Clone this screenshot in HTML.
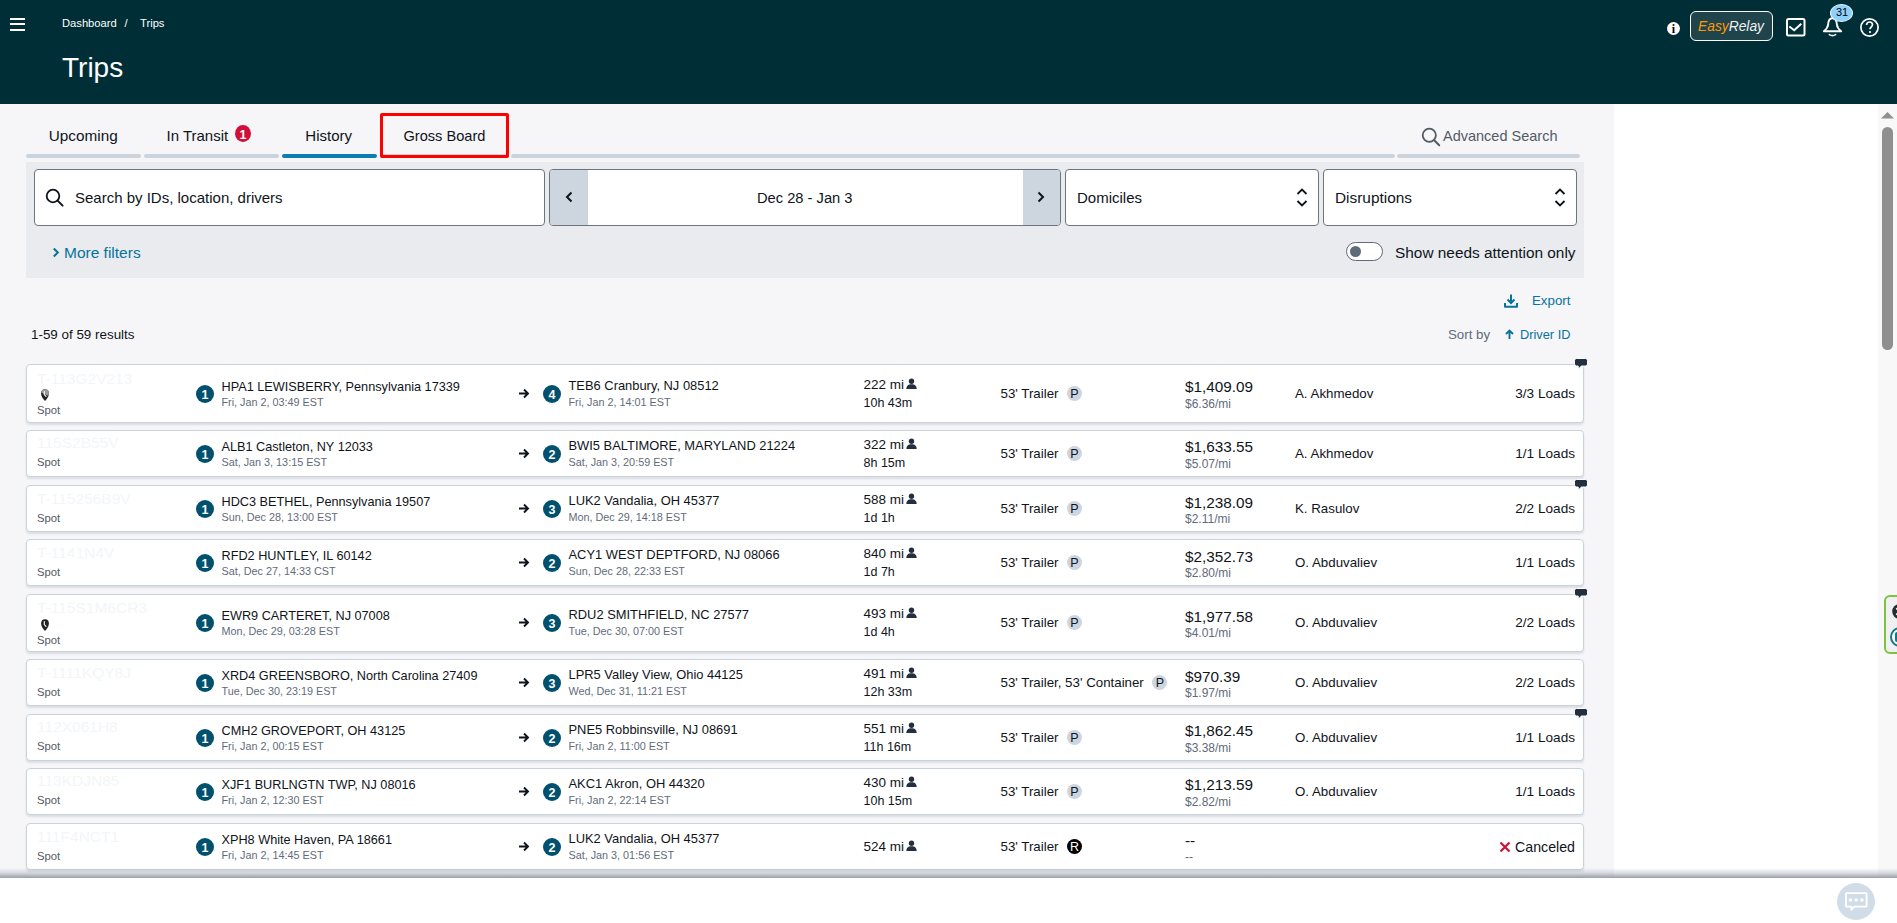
<!DOCTYPE html><html><head><meta charset="utf-8"><title>Trips</title><style>
*{margin:0;padding:0;box-sizing:border-box}
html,body{width:1897px;height:923px;overflow:hidden;background:#fff}
body{position:relative;font-family:"Liberation Sans",sans-serif;color:#0f141a}
.t{position:absolute;white-space:nowrap}
.card{position:absolute;left:26px;width:1558px;background:#fff;border:1px solid #c9d3dd;border-radius:4px;box-shadow:0 2px 2px rgba(30,50,80,0.12)}
.badge{position:absolute;width:18px;height:18px;border-radius:50%;background:#00506e;color:#fff;font-weight:700;font-size:12.5px;line-height:20px;text-align:center}
.pb{position:absolute;top:0;margin-left:8.5px;width:15px;height:15px;border-radius:50%;background:#cdd5e0;color:#0f141a;font-size:12.5px;line-height:17px;text-align:center}
.rb{position:absolute;top:0;margin-left:8.5px;width:15px;height:15px;border-radius:50%;background:#000;color:#fff;font-weight:400;font-size:12.5px;line-height:17px;text-align:center}
</style></head><body><div style="position:absolute;left:0px;top:0px;width:1897px;height:923px;background:#ffffff"></div>
<div style="position:absolute;left:0px;top:104px;width:1614px;height:773px;background:#f6f6f9"></div>
<div style="position:absolute;left:1878px;top:104px;width:19px;height:773px;background:#f8f8f8"></div>
<div style="position:absolute;left:0px;top:0px;width:1897px;height:104px;background:#002e36"></div>
<div style="position:absolute;left:10px;top:18px;width:15px;height:2px;background:#fff"></div>
<div style="position:absolute;left:10px;top:23px;width:15px;height:2px;background:#fff"></div>
<div style="position:absolute;left:10px;top:29px;width:15px;height:2px;background:#fff"></div>
<div class="t " style="left:62px;top:17px;font-size:11.2px;line-height:12px;color:#ffffff;font-weight:400;">Dashboard</div>
<div class="t " style="left:124.5px;top:17px;font-size:11.2px;line-height:12px;color:#ffffff;font-weight:400;">/</div>
<div class="t " style="left:140px;top:17px;font-size:11.2px;line-height:12px;color:#ffffff;font-weight:400;">Trips</div>
<div class="t " style="left:62px;top:52px;font-size:28px;line-height:31px;color:#ffffff;font-weight:400;">Trips</div>
<div style="position:absolute;left:1667px;top:22px;width:13px;height:13px;border-radius:50%;background:#fff;"></div>
<div class="t" style="left:1667px;top:22px;width:13px;text-align:center;font-family:'Liberation Serif',serif;font-weight:700;font-size:12px;line-height:14px;color:#000">i</div>
<div style="position:absolute;left:1690px;top:11px;width:83px;height:30px;border:1.5px solid #fff;border-radius:6px;background:#1f444c"></div>
<div class="t " style="left:1698px;top:19px;font-size:13.8px;line-height:15px;color:#fff;font-weight:400;font-style:italic"><span style="color:#ff9900">Easy</span><span style="color:#f2f2f2">Relay</span></div>
<svg style="position:absolute;left:1786px;top:18px" width="20" height="19" viewBox="0 0 20 19"><rect x="1" y="1" width="17.5" height="16.5" rx="1.5" fill="none" stroke="#fff" stroke-width="2"/><path d="M3.3 8.5 L8.2 12.2 L15.3 5.7" fill="none" stroke="#fff" stroke-width="2"/></svg>
<svg style="position:absolute;left:1822px;top:16px" width="22" height="22" viewBox="0 0 22 22"><path d="M1.8 15.3 C4 13.5 5.9 12 6.1 8.5 C6.3 4.6 7.9 2.3 10.5 2.3 C13.1 2.3 14.7 4.6 14.9 8.5 C15.1 12 17 13.5 19.2 15.3 Z" fill="none" stroke="#fff" stroke-width="1.9" stroke-linejoin="round"/><path d="M7.4 18.6 Q10.5 20.6 13.6 18.6" fill="none" stroke="#fff" stroke-width="1.7" stroke-linecap="round"/></svg>
<div style="position:absolute;left:1830px;top:4px;width:23px;height:18px;border-radius:50%;background:#8dd1fa;border:1px solid #e8f4fb;box-sizing:border-box"></div>
<div class="t " style="left:1830px;top:6px;font-size:11px;line-height:12px;color:#000000;font-weight:400;width:24px;text-align:center">31</div>
<svg style="position:absolute;left:1859px;top:17px" width="21" height="21" viewBox="0 0 21 21"><circle cx="10.5" cy="10.5" r="8.6" fill="none" stroke="#fff" stroke-width="1.7"/><path d="M7.6 8 C7.6 6 9 5 10.5 5 C12.2 5 13.5 6.2 13.5 7.8 C13.5 9.8 11 10 11 12.3" fill="none" stroke="#fff" stroke-width="1.7"/><circle cx="11" cy="15" r="1.1" fill="#fff"/></svg>
<div style="position:absolute;left:26px;top:154px;width:115px;height:4px;background:#cbd3dc;border-radius:2px"></div>
<div class="t " style="left:48.8px;top:127px;font-size:15.3px;line-height:17px;color:#0f141a;font-weight:400;">Upcoming</div>
<div style="position:absolute;left:144px;top:154px;width:135px;height:4px;background:#cbd3dc;border-radius:2px"></div>
<div class="t " style="left:166.5px;top:127px;font-size:15px;line-height:17px;color:#0f141a;font-weight:400;">In Transit</div>
<div style="position:absolute;left:282px;top:154px;width:95px;height:4px;background:#0b7eb0;border-radius:2px"></div>
<div class="t " style="left:305.3px;top:127px;font-size:15px;line-height:17px;color:#0f141a;font-weight:400;">History</div>
<div style="position:absolute;left:380px;top:154px;width:129px;height:4px;background:#cbd3dc;border-radius:2px"></div>
<div class="t " style="left:403.5px;top:128px;font-size:14.6px;line-height:16px;color:#0f141a;font-weight:400;">Gross Board</div>
<div style="position:absolute;left:511px;top:154px;width:884px;height:4px;background:#cbd3dc;border-radius:2px"></div>
<div style="position:absolute;left:1397px;top:154px;width:183px;height:4px;background:#cbd3dc;border-radius:2px"></div>
<div style="position:absolute;left:235px;top:125px;width:16px;height:17px;border-radius:50%;background:#d0103a"></div>
<div class="t " style="left:235px;top:127.5px;font-size:12.5px;line-height:14px;color:#fff;font-weight:700;width:16px;text-align:center">1</div>
<div style="position:absolute;left:380px;top:113px;width:129px;height:45px;border:3px solid #ff0000;box-sizing:border-box;border-radius:2px"></div>
<svg style="position:absolute;left:1421px;top:127px" width="20" height="20" viewBox="0 0 20 20"><circle cx="8.3" cy="8.3" r="6.6" fill="none" stroke="#545b64" stroke-width="1.8"/><path d="M13 13 L18.2 18.2" stroke="#545b64" stroke-width="2" stroke-linecap="round"/></svg>
<div class="t " style="left:1443px;top:128px;font-size:14.5px;line-height:16px;color:#545b64;font-weight:400;">Advanced Search</div>
<div style="position:absolute;left:26px;top:162px;width:1558px;height:116px;background:#e9ebef"></div>
<div style="position:absolute;left:34px;top:169px;width:511px;height:57px;border:1px solid #6b757f;border-radius:4px;background:#fff;box-sizing:border-box"></div>
<div style="position:absolute;left:549px;top:169px;width:512px;height:57px;border:1px solid #6b757f;border-radius:4px;background:#fff;box-sizing:border-box"></div>
<div style="position:absolute;left:1065px;top:169px;width:254px;height:57px;border:1px solid #6b757f;border-radius:4px;background:#fff;box-sizing:border-box"></div>
<div style="position:absolute;left:1323px;top:169px;width:254px;height:57px;border:1px solid #6b757f;border-radius:4px;background:#fff;box-sizing:border-box"></div>
<svg style="position:absolute;left:45px;top:188px" width="20" height="20" viewBox="0 0 20 20"><circle cx="8" cy="8" r="6.3" fill="none" stroke="#0f141a" stroke-width="1.8"/><path d="M12.6 12.6 L17.6 17.6" stroke="#0f141a" stroke-width="2" stroke-linecap="round"/></svg>
<div class="t " style="left:75px;top:189px;font-size:15px;line-height:17px;color:#0f141a;font-weight:400;">Search by IDs, location, drivers</div>
<div style="position:absolute;left:550px;top:170px;width:38px;height:55px;background:#cdd5de;border-radius:3px 0 0 3px"></div>
<div style="position:absolute;left:1023px;top:170px;width:37px;height:55px;background:#cdd5de;border-radius:0 3px 3px 0"></div>
<svg style="position:absolute;left:564px;top:191px" width="10" height="12" viewBox="0 0 10 12"><path d="M7.5 1.5 L3 6 L7.5 10.5" fill="none" stroke="#0f141a" stroke-width="2"/></svg>
<svg style="position:absolute;left:1036px;top:191px" width="10" height="12" viewBox="0 0 10 12"><path d="M2.5 1.5 L7 6 L2.5 10.5" fill="none" stroke="#0f141a" stroke-width="2"/></svg>
<div class="t " style="left:757px;top:190px;font-size:14.7px;line-height:16px;color:#0f141a;font-weight:400;">Dec 28 - Jan 3</div>
<div class="t " style="left:1077px;top:189px;font-size:15px;line-height:17px;color:#0f141a;font-weight:400;">Domiciles</div>
<div class="t " style="left:1335px;top:189px;font-size:15.4px;line-height:17px;color:#0f141a;font-weight:400;">Disruptions</div>
<svg style="position:absolute;left:1296px;top:188px" width="12" height="19" viewBox="0 0 12 19"><path d="M1.5 6 L6 1.5 L10.5 6 M1.5 13 L6 17.5 L10.5 13" fill="none" stroke="#0f141a" stroke-width="1.8"/></svg>
<svg style="position:absolute;left:1553.5px;top:188px" width="12" height="19" viewBox="0 0 12 19"><path d="M1.5 6 L6 1.5 L10.5 6 M1.5 13 L6 17.5 L10.5 13" fill="none" stroke="#0f141a" stroke-width="1.8"/></svg>
<svg style="position:absolute;left:52px;top:247px" width="8" height="11" viewBox="0 0 8 11"><path d="M1.8 1.5 L5.8 5.5 L1.8 9.5" fill="none" stroke="#07739a" stroke-width="2"/></svg>
<div class="t " style="left:64px;top:244px;font-size:15.5px;line-height:17px;color:#07739a;font-weight:400;">More filters</div>
<div style="position:absolute;left:1346px;top:242px;width:37px;height:19px;border:1px solid #5f6b7a;border-radius:10px;background:#fff;box-sizing:border-box"></div>
<div style="position:absolute;left:1350px;top:246px;width:11px;height:11px;border-radius:50%;background:#5f6b7a"></div>
<div class="t " style="left:1395px;top:244px;font-size:15.4px;line-height:17px;color:#0f141a;font-weight:400;">Show needs attention only</div>
<svg style="position:absolute;left:1503px;top:293px" width="16" height="16" viewBox="0 0 16 16"><path d="M8 1.5 V9.5 M4.5 6.5 L8 10 L11.5 6.5" fill="none" stroke="#07739a" stroke-width="2"/><path d="M2 10 V13.8 H14 V10" fill="none" stroke="#07739a" stroke-width="2" stroke-linejoin="round"/></svg>
<div class="t " style="left:1532px;top:293px;font-size:13.3px;line-height:15px;color:#07739a;font-weight:400;">Export</div>
<div class="t " style="left:31px;top:327px;font-size:13.4px;line-height:15px;color:#0f141a;font-weight:400;">1-59 of 59 results</div>
<div class="t " style="left:1448px;top:327px;font-size:13.3px;line-height:15px;color:#5f6b7a;font-weight:400;">Sort by</div>
<svg style="position:absolute;left:1504px;top:329px" width="11" height="11" viewBox="0 0 11 11"><path d="M5.5 10 V2 M2 5 L5.5 1.5 L9 5" fill="none" stroke="#07739a" stroke-width="1.9"/></svg>
<div class="t " style="left:1520px;top:327px;font-size:12.8px;line-height:15px;color:#07739a;font-weight:400;">Driver ID</div>
<div class="card" style="top:364px;height:59px"></div>
<div class="t " style="left:37px;top:370px;font-size:15.5px;line-height:17px;color:#f3f6f9;font-weight:400;">T-113G2V213</div>
<svg style="position:absolute;left:41px;top:389px" width="8" height="12" viewBox="0 0 8 12"><defs><clipPath id="shc364"><path d="M4 0.3 C6.6 0.3 7.9 1.9 7.9 4.4 C7.9 7.4 5.7 10 4 11.9 C2.3 10 0.1 7.4 0.1 4.4 C0.1 1.9 1.4 0.3 4 0.3 Z"/></clipPath></defs><path d="M4 0.3 C6.6 0.3 7.9 1.9 7.9 4.4 C7.9 7.4 5.7 10 4 11.9 C2.3 10 0.1 7.4 0.1 4.4 C0.1 1.9 1.4 0.3 4 0.3 Z" fill="#232323"/><path d="M-1 -1 H9 V7.6 L-1 3 Z" fill="#9a9a9a" clip-path="url(#shc364)"/><path d="M3.3 2.6 V5.6 L5 7.3" fill="none" stroke="#fff" stroke-width="1.1" stroke-linecap="round"/></svg>
<div class="t " style="left:37px;top:404px;font-size:11.3px;line-height:12px;color:#545b64;font-weight:400;">Spot</div>
<div class="badge" style="left:196px;top:384.5px">1</div>
<div class="t " style="left:221.5px;top:380px;font-size:12.7px;line-height:14px;color:#0f141a;font-weight:400;">HPA1 LEWISBERRY, Pennsylvania 17339</div>
<div class="t " style="left:221.5px;top:396px;font-size:10.8px;line-height:12px;color:#5f6b7a;font-weight:400;">Fri, Jan 2, 03:49 EST</div>
<svg style="position:absolute;left:518px;top:388.0px" width="12" height="11" viewBox="0 0 12 11"><path d="M1 5.5 H10 M6 1.5 L10 5.5 L6 9.5" fill="none" stroke="#0f141a" stroke-width="1.9"/></svg>
<div class="badge" style="left:543px;top:384.5px">4</div>
<div class="t " style="left:568.5px;top:378px;font-size:12.9px;line-height:15px;color:#0f141a;font-weight:400;">TEB6 Cranbury, NJ 08512</div>
<div class="t " style="left:568.5px;top:396px;font-size:10.8px;line-height:12px;color:#5f6b7a;font-weight:400;">Fri, Jan 2, 14:01 EST</div>
<div class="t " style="left:863.5px;top:377px;font-size:13.5px;line-height:15px;color:#0f141a;font-weight:400;">222 mi<svg width="11" height="11" viewBox="0 0 11 11" style="vertical-align:0px;margin-left:2px"><circle cx="5.5" cy="3.2" r="2.7" fill="#232f3e"/><path d="M0.3 11 C0.5 7.5 2.5 6.3 5.5 6.3 C8.5 6.3 10.5 7.5 10.7 11 Z" fill="#232f3e"/></svg></div>
<div class="t " style="left:863.5px;top:396px;font-size:12.5px;line-height:14px;color:#0f141a;font-weight:400;">10h 43m</div>
<div class="t " style="left:1000.5px;top:386px;font-size:13.3px;line-height:15px;color:#0f141a;font-weight:400;">53' Trailer<span class="pb">P</span></div>
<div class="t " style="left:1185px;top:378px;font-size:15.3px;line-height:17px;color:#0f141a;font-weight:400;">$1,409.09</div>
<div class="t " style="left:1185px;top:397px;font-size:12px;line-height:14px;color:#5f6b7a;font-weight:400;">$6.36/mi</div>
<div class="t " style="left:1295px;top:386px;font-size:13.3px;line-height:15px;color:#0f141a;font-weight:400;">A. Akhmedov</div>
<div class="t " style="right:322px;top:386px;font-size:13.6px;line-height:15px;color:#0f141a;font-weight:400;">3/3 Loads</div>
<svg style="position:absolute;left:1573px;top:357px" width="16" height="13" viewBox="0 0 16 13"><path d="M3.5 1.5 H12.5 Q14.5 1.5 14.5 3.5 V7 Q14.5 9 12.5 9 H8.5 L5.3 12 L5.2 9 H3.5 Q1.5 9 1.5 7 V3.5 Q1.5 1.5 3.5 1.5 Z" fill="#232f3e" stroke="#fff" stroke-width="1"/></svg>
<div class="card" style="top:430px;height:47px"></div>
<div class="t " style="left:37px;top:434px;font-size:15.5px;line-height:17px;color:#f3f6f9;font-weight:400;">115S2B55V</div>
<div class="t " style="left:37px;top:456px;font-size:11.3px;line-height:12px;color:#545b64;font-weight:400;">Spot</div>
<div class="badge" style="left:196px;top:444.5px">1</div>
<div class="t " style="left:221.5px;top:440px;font-size:12.7px;line-height:14px;color:#0f141a;font-weight:400;">ALB1 Castleton, NY 12033</div>
<div class="t " style="left:221.5px;top:456px;font-size:10.8px;line-height:12px;color:#5f6b7a;font-weight:400;">Sat, Jan 3, 13:15 EST</div>
<svg style="position:absolute;left:518px;top:448.0px" width="12" height="11" viewBox="0 0 12 11"><path d="M1 5.5 H10 M6 1.5 L10 5.5 L6 9.5" fill="none" stroke="#0f141a" stroke-width="1.9"/></svg>
<div class="badge" style="left:543px;top:444.5px">2</div>
<div class="t " style="left:568.5px;top:438px;font-size:12.9px;line-height:15px;color:#0f141a;font-weight:400;">BWI5 BALTIMORE, MARYLAND 21224</div>
<div class="t " style="left:568.5px;top:456px;font-size:10.8px;line-height:12px;color:#5f6b7a;font-weight:400;">Sat, Jan 3, 20:59 EST</div>
<div class="t " style="left:863.5px;top:437px;font-size:13.5px;line-height:15px;color:#0f141a;font-weight:400;">322 mi<svg width="11" height="11" viewBox="0 0 11 11" style="vertical-align:0px;margin-left:2px"><circle cx="5.5" cy="3.2" r="2.7" fill="#232f3e"/><path d="M0.3 11 C0.5 7.5 2.5 6.3 5.5 6.3 C8.5 6.3 10.5 7.5 10.7 11 Z" fill="#232f3e"/></svg></div>
<div class="t " style="left:863.5px;top:456px;font-size:12.5px;line-height:14px;color:#0f141a;font-weight:400;">8h 15m</div>
<div class="t " style="left:1000.5px;top:446px;font-size:13.3px;line-height:15px;color:#0f141a;font-weight:400;">53' Trailer<span class="pb">P</span></div>
<div class="t " style="left:1185px;top:438px;font-size:15.3px;line-height:17px;color:#0f141a;font-weight:400;">$1,633.55</div>
<div class="t " style="left:1185px;top:457px;font-size:12px;line-height:14px;color:#5f6b7a;font-weight:400;">$5.07/mi</div>
<div class="t " style="left:1295px;top:446px;font-size:13.3px;line-height:15px;color:#0f141a;font-weight:400;">A. Akhmedov</div>
<div class="t " style="right:322px;top:446px;font-size:13.6px;line-height:15px;color:#0f141a;font-weight:400;">1/1 Loads</div>
<div class="card" style="top:485px;height:47px"></div>
<div class="t " style="left:37px;top:490px;font-size:15.5px;line-height:17px;color:#f3f6f9;font-weight:400;">T-115256B9V</div>
<div class="t " style="left:37px;top:512px;font-size:11.3px;line-height:12px;color:#545b64;font-weight:400;">Spot</div>
<div class="badge" style="left:196px;top:499.5px">1</div>
<div class="t " style="left:221.5px;top:495px;font-size:12.7px;line-height:14px;color:#0f141a;font-weight:400;">HDC3 BETHEL, Pennsylvania 19507</div>
<div class="t " style="left:221.5px;top:511px;font-size:10.8px;line-height:12px;color:#5f6b7a;font-weight:400;">Sun, Dec 28, 13:00 EST</div>
<svg style="position:absolute;left:518px;top:503.0px" width="12" height="11" viewBox="0 0 12 11"><path d="M1 5.5 H10 M6 1.5 L10 5.5 L6 9.5" fill="none" stroke="#0f141a" stroke-width="1.9"/></svg>
<div class="badge" style="left:543px;top:499.5px">3</div>
<div class="t " style="left:568.5px;top:493px;font-size:12.9px;line-height:15px;color:#0f141a;font-weight:400;">LUK2 Vandalia, OH 45377</div>
<div class="t " style="left:568.5px;top:511px;font-size:10.8px;line-height:12px;color:#5f6b7a;font-weight:400;">Mon, Dec 29, 14:18 EST</div>
<div class="t " style="left:863.5px;top:492px;font-size:13.5px;line-height:15px;color:#0f141a;font-weight:400;">588 mi<svg width="11" height="11" viewBox="0 0 11 11" style="vertical-align:0px;margin-left:2px"><circle cx="5.5" cy="3.2" r="2.7" fill="#232f3e"/><path d="M0.3 11 C0.5 7.5 2.5 6.3 5.5 6.3 C8.5 6.3 10.5 7.5 10.7 11 Z" fill="#232f3e"/></svg></div>
<div class="t " style="left:863.5px;top:511px;font-size:12.5px;line-height:14px;color:#0f141a;font-weight:400;">1d 1h</div>
<div class="t " style="left:1000.5px;top:501px;font-size:13.3px;line-height:15px;color:#0f141a;font-weight:400;">53' Trailer<span class="pb">P</span></div>
<div class="t " style="left:1185px;top:494px;font-size:15.3px;line-height:17px;color:#0f141a;font-weight:400;">$1,238.09</div>
<div class="t " style="left:1185px;top:512px;font-size:12px;line-height:14px;color:#5f6b7a;font-weight:400;">$2.11/mi</div>
<div class="t " style="left:1295px;top:501px;font-size:13.3px;line-height:15px;color:#0f141a;font-weight:400;">K. Rasulov</div>
<div class="t " style="right:322px;top:501px;font-size:13.6px;line-height:15px;color:#0f141a;font-weight:400;">2/2 Loads</div>
<svg style="position:absolute;left:1573px;top:478px" width="16" height="13" viewBox="0 0 16 13"><path d="M3.5 1.5 H12.5 Q14.5 1.5 14.5 3.5 V7 Q14.5 9 12.5 9 H8.5 L5.3 12 L5.2 9 H3.5 Q1.5 9 1.5 7 V3.5 Q1.5 1.5 3.5 1.5 Z" fill="#232f3e" stroke="#fff" stroke-width="1"/></svg>
<div class="card" style="top:539px;height:47px"></div>
<div class="t " style="left:37px;top:544px;font-size:15.5px;line-height:17px;color:#f3f6f9;font-weight:400;">T-1141N4V</div>
<div class="t " style="left:37px;top:566px;font-size:11.3px;line-height:12px;color:#545b64;font-weight:400;">Spot</div>
<div class="badge" style="left:196px;top:553.5px">1</div>
<div class="t " style="left:221.5px;top:549px;font-size:12.7px;line-height:14px;color:#0f141a;font-weight:400;">RFD2 HUNTLEY, IL 60142</div>
<div class="t " style="left:221.5px;top:565px;font-size:10.8px;line-height:12px;color:#5f6b7a;font-weight:400;">Sat, Dec 27, 14:33 CST</div>
<svg style="position:absolute;left:518px;top:557.0px" width="12" height="11" viewBox="0 0 12 11"><path d="M1 5.5 H10 M6 1.5 L10 5.5 L6 9.5" fill="none" stroke="#0f141a" stroke-width="1.9"/></svg>
<div class="badge" style="left:543px;top:553.5px">2</div>
<div class="t " style="left:568.5px;top:547px;font-size:12.9px;line-height:15px;color:#0f141a;font-weight:400;">ACY1 WEST DEPTFORD, NJ 08066</div>
<div class="t " style="left:568.5px;top:565px;font-size:10.8px;line-height:12px;color:#5f6b7a;font-weight:400;">Sun, Dec 28, 22:33 EST</div>
<div class="t " style="left:863.5px;top:546px;font-size:13.5px;line-height:15px;color:#0f141a;font-weight:400;">840 mi<svg width="11" height="11" viewBox="0 0 11 11" style="vertical-align:0px;margin-left:2px"><circle cx="5.5" cy="3.2" r="2.7" fill="#232f3e"/><path d="M0.3 11 C0.5 7.5 2.5 6.3 5.5 6.3 C8.5 6.3 10.5 7.5 10.7 11 Z" fill="#232f3e"/></svg></div>
<div class="t " style="left:863.5px;top:565px;font-size:12.5px;line-height:14px;color:#0f141a;font-weight:400;">1d 7h</div>
<div class="t " style="left:1000.5px;top:555px;font-size:13.3px;line-height:15px;color:#0f141a;font-weight:400;">53' Trailer<span class="pb">P</span></div>
<div class="t " style="left:1185px;top:548px;font-size:15.3px;line-height:17px;color:#0f141a;font-weight:400;">$2,352.73</div>
<div class="t " style="left:1185px;top:566px;font-size:12px;line-height:14px;color:#5f6b7a;font-weight:400;">$2.80/mi</div>
<div class="t " style="left:1295px;top:555px;font-size:13.3px;line-height:15px;color:#0f141a;font-weight:400;">O. Abduvaliev</div>
<div class="t " style="right:322px;top:555px;font-size:13.6px;line-height:15px;color:#0f141a;font-weight:400;">1/1 Loads</div>
<div class="card" style="top:594px;height:58px"></div>
<div class="t " style="left:37px;top:599px;font-size:15.5px;line-height:17px;color:#f3f6f9;font-weight:400;">T-115S1M6CR3</div>
<svg style="position:absolute;left:41px;top:619px" width="8" height="12" viewBox="0 0 8 12"><defs><clipPath id="shc594"><path d="M4 0.3 C6.6 0.3 7.9 1.9 7.9 4.4 C7.9 7.4 5.7 10 4 11.9 C2.3 10 0.1 7.4 0.1 4.4 C0.1 1.9 1.4 0.3 4 0.3 Z"/></clipPath></defs><path d="M4 0.3 C6.6 0.3 7.9 1.9 7.9 4.4 C7.9 7.4 5.7 10 4 11.9 C2.3 10 0.1 7.4 0.1 4.4 C0.1 1.9 1.4 0.3 4 0.3 Z" fill="#232323"/><path d="M3.3 2.6 V5.6 L5 7.3" fill="none" stroke="#fff" stroke-width="1.1" stroke-linecap="round"/></svg>
<div class="t " style="left:37px;top:634px;font-size:11.3px;line-height:12px;color:#545b64;font-weight:400;">Spot</div>
<div class="badge" style="left:196px;top:613.5px">1</div>
<div class="t " style="left:221.5px;top:609px;font-size:12.7px;line-height:14px;color:#0f141a;font-weight:400;">EWR9 CARTERET, NJ 07008</div>
<div class="t " style="left:221.5px;top:625px;font-size:10.8px;line-height:12px;color:#5f6b7a;font-weight:400;">Mon, Dec 29, 03:28 EST</div>
<svg style="position:absolute;left:518px;top:617.0px" width="12" height="11" viewBox="0 0 12 11"><path d="M1 5.5 H10 M6 1.5 L10 5.5 L6 9.5" fill="none" stroke="#0f141a" stroke-width="1.9"/></svg>
<div class="badge" style="left:543px;top:613.5px">3</div>
<div class="t " style="left:568.5px;top:607px;font-size:12.9px;line-height:15px;color:#0f141a;font-weight:400;">RDU2 SMITHFIELD, NC 27577</div>
<div class="t " style="left:568.5px;top:625px;font-size:10.8px;line-height:12px;color:#5f6b7a;font-weight:400;">Tue, Dec 30, 07:00 EST</div>
<div class="t " style="left:863.5px;top:606px;font-size:13.5px;line-height:15px;color:#0f141a;font-weight:400;">493 mi<svg width="11" height="11" viewBox="0 0 11 11" style="vertical-align:0px;margin-left:2px"><circle cx="5.5" cy="3.2" r="2.7" fill="#232f3e"/><path d="M0.3 11 C0.5 7.5 2.5 6.3 5.5 6.3 C8.5 6.3 10.5 7.5 10.7 11 Z" fill="#232f3e"/></svg></div>
<div class="t " style="left:863.5px;top:625px;font-size:12.5px;line-height:14px;color:#0f141a;font-weight:400;">1d 4h</div>
<div class="t " style="left:1000.5px;top:615px;font-size:13.3px;line-height:15px;color:#0f141a;font-weight:400;">53' Trailer<span class="pb">P</span></div>
<div class="t " style="left:1185px;top:608px;font-size:15.3px;line-height:17px;color:#0f141a;font-weight:400;">$1,977.58</div>
<div class="t " style="left:1185px;top:626px;font-size:12px;line-height:14px;color:#5f6b7a;font-weight:400;">$4.01/mi</div>
<div class="t " style="left:1295px;top:615px;font-size:13.3px;line-height:15px;color:#0f141a;font-weight:400;">O. Abduvaliev</div>
<div class="t " style="right:322px;top:615px;font-size:13.6px;line-height:15px;color:#0f141a;font-weight:400;">2/2 Loads</div>
<svg style="position:absolute;left:1573px;top:587px" width="16" height="13" viewBox="0 0 16 13"><path d="M3.5 1.5 H12.5 Q14.5 1.5 14.5 3.5 V7 Q14.5 9 12.5 9 H8.5 L5.3 12 L5.2 9 H3.5 Q1.5 9 1.5 7 V3.5 Q1.5 1.5 3.5 1.5 Z" fill="#232f3e" stroke="#fff" stroke-width="1"/></svg>
<div class="card" style="top:659px;height:47px"></div>
<div class="t " style="left:37px;top:664px;font-size:15.5px;line-height:17px;color:#f3f6f9;font-weight:400;">T-1111KQY8J</div>
<div class="t " style="left:37px;top:686px;font-size:11.3px;line-height:12px;color:#545b64;font-weight:400;">Spot</div>
<div class="badge" style="left:196px;top:673.5px">1</div>
<div class="t " style="left:221.5px;top:669px;font-size:12.7px;line-height:14px;color:#0f141a;font-weight:400;">XRD4 GREENSBORO, North Carolina 27409</div>
<div class="t " style="left:221.5px;top:685px;font-size:10.8px;line-height:12px;color:#5f6b7a;font-weight:400;">Tue, Dec 30, 23:19 EST</div>
<svg style="position:absolute;left:518px;top:677.0px" width="12" height="11" viewBox="0 0 12 11"><path d="M1 5.5 H10 M6 1.5 L10 5.5 L6 9.5" fill="none" stroke="#0f141a" stroke-width="1.9"/></svg>
<div class="badge" style="left:543px;top:673.5px">3</div>
<div class="t " style="left:568.5px;top:667px;font-size:12.9px;line-height:15px;color:#0f141a;font-weight:400;">LPR5 Valley View, Ohio 44125</div>
<div class="t " style="left:568.5px;top:685px;font-size:10.8px;line-height:12px;color:#5f6b7a;font-weight:400;">Wed, Dec 31, 11:21 EST</div>
<div class="t " style="left:863.5px;top:666px;font-size:13.5px;line-height:15px;color:#0f141a;font-weight:400;">491 mi<svg width="11" height="11" viewBox="0 0 11 11" style="vertical-align:0px;margin-left:2px"><circle cx="5.5" cy="3.2" r="2.7" fill="#232f3e"/><path d="M0.3 11 C0.5 7.5 2.5 6.3 5.5 6.3 C8.5 6.3 10.5 7.5 10.7 11 Z" fill="#232f3e"/></svg></div>
<div class="t " style="left:863.5px;top:685px;font-size:12.5px;line-height:14px;color:#0f141a;font-weight:400;">12h 33m</div>
<div class="t " style="left:1000.5px;top:675px;font-size:13.3px;line-height:15px;color:#0f141a;font-weight:400;">53' Trailer, 53' Container<span class="pb">P</span></div>
<div class="t " style="left:1185px;top:668px;font-size:15.3px;line-height:17px;color:#0f141a;font-weight:400;">$970.39</div>
<div class="t " style="left:1185px;top:686px;font-size:12px;line-height:14px;color:#5f6b7a;font-weight:400;">$1.97/mi</div>
<div class="t " style="left:1295px;top:675px;font-size:13.3px;line-height:15px;color:#0f141a;font-weight:400;">O. Abduvaliev</div>
<div class="t " style="right:322px;top:675px;font-size:13.6px;line-height:15px;color:#0f141a;font-weight:400;">2/2 Loads</div>
<div class="card" style="top:714px;height:47px"></div>
<div class="t " style="left:37px;top:718px;font-size:15.5px;line-height:17px;color:#f3f6f9;font-weight:400;">112X061H8</div>
<div class="t " style="left:37px;top:740px;font-size:11.3px;line-height:12px;color:#545b64;font-weight:400;">Spot</div>
<div class="badge" style="left:196px;top:728.5px">1</div>
<div class="t " style="left:221.5px;top:724px;font-size:12.7px;line-height:14px;color:#0f141a;font-weight:400;">CMH2 GROVEPORT, OH 43125</div>
<div class="t " style="left:221.5px;top:740px;font-size:10.8px;line-height:12px;color:#5f6b7a;font-weight:400;">Fri, Jan 2, 00:15 EST</div>
<svg style="position:absolute;left:518px;top:732.0px" width="12" height="11" viewBox="0 0 12 11"><path d="M1 5.5 H10 M6 1.5 L10 5.5 L6 9.5" fill="none" stroke="#0f141a" stroke-width="1.9"/></svg>
<div class="badge" style="left:543px;top:728.5px">2</div>
<div class="t " style="left:568.5px;top:722px;font-size:12.9px;line-height:15px;color:#0f141a;font-weight:400;">PNE5 Robbinsville, NJ 08691</div>
<div class="t " style="left:568.5px;top:740px;font-size:10.8px;line-height:12px;color:#5f6b7a;font-weight:400;">Fri, Jan 2, 11:00 EST</div>
<div class="t " style="left:863.5px;top:721px;font-size:13.5px;line-height:15px;color:#0f141a;font-weight:400;">551 mi<svg width="11" height="11" viewBox="0 0 11 11" style="vertical-align:0px;margin-left:2px"><circle cx="5.5" cy="3.2" r="2.7" fill="#232f3e"/><path d="M0.3 11 C0.5 7.5 2.5 6.3 5.5 6.3 C8.5 6.3 10.5 7.5 10.7 11 Z" fill="#232f3e"/></svg></div>
<div class="t " style="left:863.5px;top:740px;font-size:12.5px;line-height:14px;color:#0f141a;font-weight:400;">11h 16m</div>
<div class="t " style="left:1000.5px;top:730px;font-size:13.3px;line-height:15px;color:#0f141a;font-weight:400;">53' Trailer<span class="pb">P</span></div>
<div class="t " style="left:1185px;top:722px;font-size:15.3px;line-height:17px;color:#0f141a;font-weight:400;">$1,862.45</div>
<div class="t " style="left:1185px;top:741px;font-size:12px;line-height:14px;color:#5f6b7a;font-weight:400;">$3.38/mi</div>
<div class="t " style="left:1295px;top:730px;font-size:13.3px;line-height:15px;color:#0f141a;font-weight:400;">O. Abduvaliev</div>
<div class="t " style="right:322px;top:730px;font-size:13.6px;line-height:15px;color:#0f141a;font-weight:400;">1/1 Loads</div>
<svg style="position:absolute;left:1573px;top:707px" width="16" height="13" viewBox="0 0 16 13"><path d="M3.5 1.5 H12.5 Q14.5 1.5 14.5 3.5 V7 Q14.5 9 12.5 9 H8.5 L5.3 12 L5.2 9 H3.5 Q1.5 9 1.5 7 V3.5 Q1.5 1.5 3.5 1.5 Z" fill="#232f3e" stroke="#fff" stroke-width="1"/></svg>
<div class="card" style="top:768px;height:47px"></div>
<div class="t " style="left:37px;top:772px;font-size:15.5px;line-height:17px;color:#f3f6f9;font-weight:400;">113KDJN85</div>
<div class="t " style="left:37px;top:794px;font-size:11.3px;line-height:12px;color:#545b64;font-weight:400;">Spot</div>
<div class="badge" style="left:196px;top:782.5px">1</div>
<div class="t " style="left:221.5px;top:778px;font-size:12.7px;line-height:14px;color:#0f141a;font-weight:400;">XJF1 BURLNGTN TWP, NJ 08016</div>
<div class="t " style="left:221.5px;top:794px;font-size:10.8px;line-height:12px;color:#5f6b7a;font-weight:400;">Fri, Jan 2, 12:30 EST</div>
<svg style="position:absolute;left:518px;top:786.0px" width="12" height="11" viewBox="0 0 12 11"><path d="M1 5.5 H10 M6 1.5 L10 5.5 L6 9.5" fill="none" stroke="#0f141a" stroke-width="1.9"/></svg>
<div class="badge" style="left:543px;top:782.5px">2</div>
<div class="t " style="left:568.5px;top:776px;font-size:12.9px;line-height:15px;color:#0f141a;font-weight:400;">AKC1 Akron, OH 44320</div>
<div class="t " style="left:568.5px;top:794px;font-size:10.8px;line-height:12px;color:#5f6b7a;font-weight:400;">Fri, Jan 2, 22:14 EST</div>
<div class="t " style="left:863.5px;top:775px;font-size:13.5px;line-height:15px;color:#0f141a;font-weight:400;">430 mi<svg width="11" height="11" viewBox="0 0 11 11" style="vertical-align:0px;margin-left:2px"><circle cx="5.5" cy="3.2" r="2.7" fill="#232f3e"/><path d="M0.3 11 C0.5 7.5 2.5 6.3 5.5 6.3 C8.5 6.3 10.5 7.5 10.7 11 Z" fill="#232f3e"/></svg></div>
<div class="t " style="left:863.5px;top:794px;font-size:12.5px;line-height:14px;color:#0f141a;font-weight:400;">10h 15m</div>
<div class="t " style="left:1000.5px;top:784px;font-size:13.3px;line-height:15px;color:#0f141a;font-weight:400;">53' Trailer<span class="pb">P</span></div>
<div class="t " style="left:1185px;top:776px;font-size:15.3px;line-height:17px;color:#0f141a;font-weight:400;">$1,213.59</div>
<div class="t " style="left:1185px;top:795px;font-size:12px;line-height:14px;color:#5f6b7a;font-weight:400;">$2.82/mi</div>
<div class="t " style="left:1295px;top:784px;font-size:13.3px;line-height:15px;color:#0f141a;font-weight:400;">O. Abduvaliev</div>
<div class="t " style="right:322px;top:784px;font-size:13.6px;line-height:15px;color:#0f141a;font-weight:400;">1/1 Loads</div>
<div class="card" style="top:823px;height:47px"></div>
<div class="t " style="left:37px;top:828px;font-size:15.5px;line-height:17px;color:#f3f6f9;font-weight:400;">111F4NCT1</div>
<div class="t " style="left:37px;top:850px;font-size:11.3px;line-height:12px;color:#545b64;font-weight:400;">Spot</div>
<div class="badge" style="left:196px;top:837.5px">1</div>
<div class="t " style="left:221.5px;top:833px;font-size:12.7px;line-height:14px;color:#0f141a;font-weight:400;">XPH8 White Haven, PA 18661</div>
<div class="t " style="left:221.5px;top:849px;font-size:10.8px;line-height:12px;color:#5f6b7a;font-weight:400;">Fri, Jan 2, 14:45 EST</div>
<svg style="position:absolute;left:518px;top:841.0px" width="12" height="11" viewBox="0 0 12 11"><path d="M1 5.5 H10 M6 1.5 L10 5.5 L6 9.5" fill="none" stroke="#0f141a" stroke-width="1.9"/></svg>
<div class="badge" style="left:543px;top:837.5px">2</div>
<div class="t " style="left:568.5px;top:831px;font-size:12.9px;line-height:15px;color:#0f141a;font-weight:400;">LUK2 Vandalia, OH 45377</div>
<div class="t " style="left:568.5px;top:849px;font-size:10.8px;line-height:12px;color:#5f6b7a;font-weight:400;">Sat, Jan 3, 01:56 EST</div>
<div class="t " style="left:863.5px;top:839px;font-size:13.5px;line-height:15px;color:#0f141a;font-weight:400;">524 mi<svg width="11" height="11" viewBox="0 0 11 11" style="vertical-align:0px;margin-left:2px"><circle cx="5.5" cy="3.2" r="2.7" fill="#232f3e"/><path d="M0.3 11 C0.5 7.5 2.5 6.3 5.5 6.3 C8.5 6.3 10.5 7.5 10.7 11 Z" fill="#232f3e"/></svg></div>
<div class="t " style="left:1000.5px;top:839px;font-size:13.3px;line-height:15px;color:#0f141a;font-weight:400;">53' Trailer<span class="rb">R</span></div>
<div class="t " style="left:1185px;top:832px;font-size:15.3px;line-height:17px;color:#0f141a;font-weight:400;">--</div>
<div class="t " style="left:1185px;top:850px;font-size:12px;line-height:14px;color:#5f6b7a;font-weight:400;">--</div>
<svg style="position:absolute;left:1499px;top:841.0px" width="12" height="12" viewBox="0 0 12 12"><path d="M1.5 1.5 L10.5 10.5 M10.5 1.5 L1.5 10.5" stroke="#d0103a" stroke-width="2.2"/></svg>
<div class="t " style="right:322px;top:839px;font-size:14.2px;line-height:16px;color:#0f141a;font-weight:400;">Canceled</div>
<div style="position:absolute;left:0;top:868px;width:1897px;height:10px;background:linear-gradient(to bottom, rgba(150,160,170,0) 0%, rgba(150,160,170,0.35) 50%, rgba(140,150,160,0.9) 100%)"></div>
<div style="position:absolute;left:0px;top:922px;width:1897px;height:1px;background:#333"></div>
<div style="position:absolute;left:0px;top:878px;width:1897px;height:45px;background:#ffffff"></div>
<div style="position:absolute;left:1837px;top:883px;width:38px;height:37px;border-radius:50%;background:#d0dde8"></div>
<svg style="position:absolute;left:1845px;top:892px" width="24" height="20" viewBox="0 0 24 20"><path d="M1 1.2 H21.6 V14.6 H9.3 L6.4 17.6 V14.6 H1 Z" fill="none" stroke="#fff" stroke-width="1.8" stroke-linejoin="round"/><circle cx="5.5" cy="8" r="1.75" fill="#fff"/><circle cx="11.2" cy="8" r="1.75" fill="#fff"/><circle cx="16.9" cy="8" r="1.75" fill="#fff"/></svg>
<svg style="position:absolute;left:1881px;top:111px" width="13" height="8" viewBox="0 0 13 8"><path d="M0 7.5 L6.5 1 L13 7.5 Z" fill="#8f8f8f"/></svg>
<div style="position:absolute;left:1882px;top:127px;width:11px;height:223px;background:#8f8f8f;border-radius:6px"></div>
<div style="position:absolute;left:1884px;top:595px;width:20px;height:59px;border:2px solid #7dc242;border-radius:6px;background:#f0f0f2;box-sizing:border-box"></div>
<svg style="position:absolute;left:1892px;top:604px" width="15" height="15" viewBox="0 0 15 15"><circle cx="7.5" cy="7.5" r="7.3" fill="#232b33"/><path d="M4.2 4.2 L10.8 10.8 M10.8 4.2 L4.2 10.8" stroke="#fff" stroke-width="1.6"/></svg>
<div style="position:absolute;left:1890px;top:627px;width:20px;height:20px;border-radius:50%;border:2.5px solid #0a7b8a;box-sizing:border-box;background:#fff"></div>
<div style="position:absolute;left:1895px;top:632px;width:4px;height:10px;border-radius:2px;background:#0a7b8a"></div></body></html>
